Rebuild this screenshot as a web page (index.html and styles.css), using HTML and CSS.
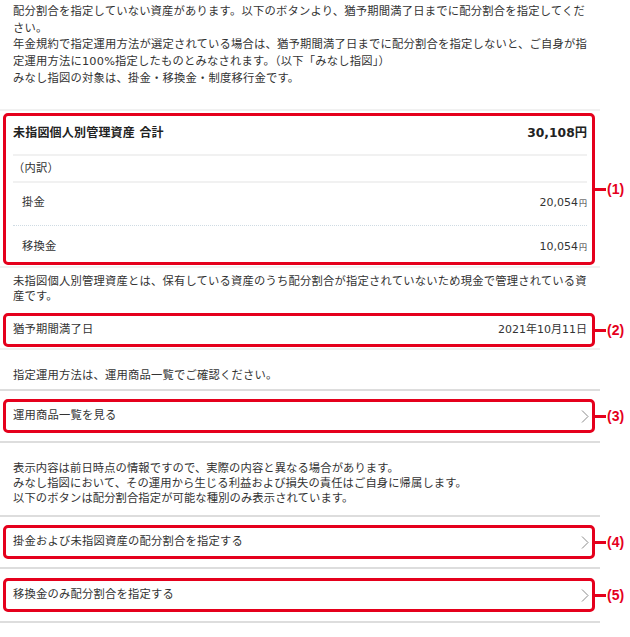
FILE: index.html
```html
<!DOCTYPE html>
<html lang="ja">
<head>
<meta charset="utf-8">
<title>配分割合の指定</title>
<link rel="stylesheet" href="styles.css">
</head>
<body>
<div class="page">
  <p class="lead">配分割合を指定していない資産があります。以下のボタンより、猶予期間満了日までに配分割合を指定してくだ<br>さい。<br>年金規約で指定運用方法が選定されている場合は、猶予期間満了日までに配分割合を指定しないと、ご自身が指<br>定運用方法に100%指定したものとみなされます。（以下「みなし指図」）<br>みなし指図の対象は、掛金・移換金・制度移行金です。</p>
  <div class="sep faint sep-a"></div>

  <section class="box box-summary">
    <div class="sum-head">
      <span>未指図個人別管理資産 合計</span>
      <span class="num">30,108円</span>
    </div>
    <div class="sum-line"></div>
    <div class="sum-sub">（内訳）</div>
    <div class="sum-line"></div>
    <div class="sum-item item-1">
      <span>掛金</span>
      <span class="num">20,054<small>円</small></span>
    </div>
    <div class="sum-dot"></div>
    <div class="sum-item item-2">
      <span>移換金</span>
      <span class="num">10,054<small>円</small></span>
    </div>
    <div class="tag"><i></i>(1)</div>
  </section>
  <div class="sep faint sep-b"></div>

  <p class="note note-1">未指図個人別管理資産とは、保有している資産のうち配分割合が指定されていないため現金で管理されている資<br>産です。</p>

  <div class="box row box-2">
    <span>猶予期間満了日</span>
    <span class="num">2021年10月11日</span>
    <div class="tag"><i></i>(2)</div>
  </div>
  <div class="sep faint sep-b"></div>

  <p class="note note-2">指定運用方法は、運用商品一覧でご確認ください。</p>
  <div class="sep sep-c"></div>

  <a class="box row link box-3" href="#">
    <span>運用商品一覧を見る</span>
    <svg class="chev" width="8" height="13" viewBox="0 0 8 13"><polyline points="1,0.5 7,6.5 1,12.5" fill="none" stroke="#8a8a8a" stroke-width="1"/></svg>
    <div class="tag"><i></i>(3)</div>
  </a>
  <div class="sep sep-d"></div>

  <p class="note note-3 tight">表示内容は前日時点の情報ですので、実際の内容と異なる場合があります。<br>みなし指図において、その運用から生じる利益および損失の責任はご自身に帰属します。<br>以下のボタンは配分割合指定が可能な種別のみ表示されています。</p>
  <div class="sep sep-e"></div>

  <a class="box row link box-4" href="#">
    <span>掛金および未指図資産の配分割合を指定する</span>
    <svg class="chev" width="8" height="13" viewBox="0 0 8 13"><polyline points="1,0.5 7,6.5 1,12.5" fill="none" stroke="#8a8a8a" stroke-width="1"/></svg>
    <div class="tag"><i></i>(4)</div>
  </a>
  <div class="sep sep-d"></div>

  <a class="box row link box-5" href="#">
    <span>移換金のみ配分割合を指定する</span>
    <svg class="chev" width="8" height="13" viewBox="0 0 8 13"><polyline points="1,0.5 7,6.5 1,12.5" fill="none" stroke="#8a8a8a" stroke-width="1"/></svg>
    <div class="tag"><i></i>(5)</div>
  </a>
  <div class="sep sep-f"></div>
</div>
</body>
</html>
```

FILE: styles.css
```css
html, body {
  margin: 0;
  padding: 0;
  background: #ffffff;
}

body {
  font-family: "DejaVu Sans", "Noto Sans CJK JP", sans-serif;
  font-size: 11.3px;
  letter-spacing: 0.2px;
  color: #333333;
}

.page {
  width: 600px;
  display: flex;
  flex-direction: column;
}

.lead {
  margin: 0;
  padding: 4px 4px 0 13px;
  line-height: 16.7px;
}

.note {
  margin: 0;
  padding: 0 4px 0 13px;
  line-height: 15px;
}

.note.tight {
  letter-spacing: 0.1px;
}

.sep {
  height: 2px;
  background: #dddddd;
  flex: none;
}

.sep.faint {
  background: #f1f1f1;
}

.sep-a { margin-top: 21.5px; }
.sep-b { margin-top: 1px; }
.sep-c { margin-top: 6.5px; }
.sep-d { margin-top: 8px; }
.sep-e { margin-top: 9px; }
.sep-f { margin-top: 9px; }

.note-1 { margin-top: 6px; }
.note-2 { margin-top: 17.5px; }
.note-3 { margin-top: 17.5px; }

.box {
  position: relative;
  margin-left: 3px;
  width: 592px;
  box-sizing: border-box;
  border: 3px solid #e5001c;
  border-radius: 5px;
  background: #ffffff;
}

.box-summary { margin-top: 2px; }
.box-2 { margin-top: 9px; }
.box-3 { margin-top: 8px; }
.box-4 { margin-top: 8.5px; }
.box-5 { margin-top: 9px; }

.num {
  font-family: "DejaVu Sans", "Noto Sans CJK JP", sans-serif;
  letter-spacing: 0;
}

.sum-head {
  display: flex;
  justify-content: space-between;
  align-items: center;
  padding: 9px 5px 13px 7px;
  line-height: 16px;
  font-size: 12px;
  font-weight: bold;
  color: #222222;
}

.sum-head .num {
  font-size: 12.3px;
}

.sum-line {
  height: 2px;
  margin: 0 5px 0 7px;
  background: #f1f1f1;
}

.sum-dot {
  margin: 0 5px 0 7px;
  border-top: 1px dotted #cfdbe3;
}

.sum-sub {
  padding: 4.5px 5px 4.5px 7px;
  line-height: 16px;
}

.sum-item {
  display: flex;
  justify-content: space-between;
  align-items: center;
  padding-left: 16px;
  padding-right: 5px;
  line-height: 16px;
}

.sum-item .num {
  font-size: 11px;
}

.sum-item small {
  font-family: "Noto Sans CJK JP", sans-serif;
  font-size: 8px;
  margin-left: 1px;
}

.item-1 { padding-top: 12px; padding-bottom: 14px; }
.item-2 { padding-top: 13px; padding-bottom: 7px; }

.row {
  display: flex;
  justify-content: space-between;
  align-items: center;
  height: 34px;
  padding: 0 5px 0 7px;
  line-height: 16px;
  color: #333333;
  text-decoration: none;
}

.row .num {
  font-size: 11px;
}

.link {
  padding-right: 3px;
}

.chev {
  display: block;
  flex: none;
}

.tag {
  position: absolute;
  left: calc(100% + 3px);
  top: 50%;
  transform: translateY(-50%);
  display: flex;
  align-items: center;
  font-family: "Liberation Sans", Arial, sans-serif;
  font-weight: bold;
  font-size: 14px;
  line-height: 16px;
  letter-spacing: 0;
  color: #e5001c;
  white-space: nowrap;
}

.tag i {
  display: block;
  width: 11px;
  height: 3px;
  margin-right: 1px;
  background: #e5001c;
}
```
